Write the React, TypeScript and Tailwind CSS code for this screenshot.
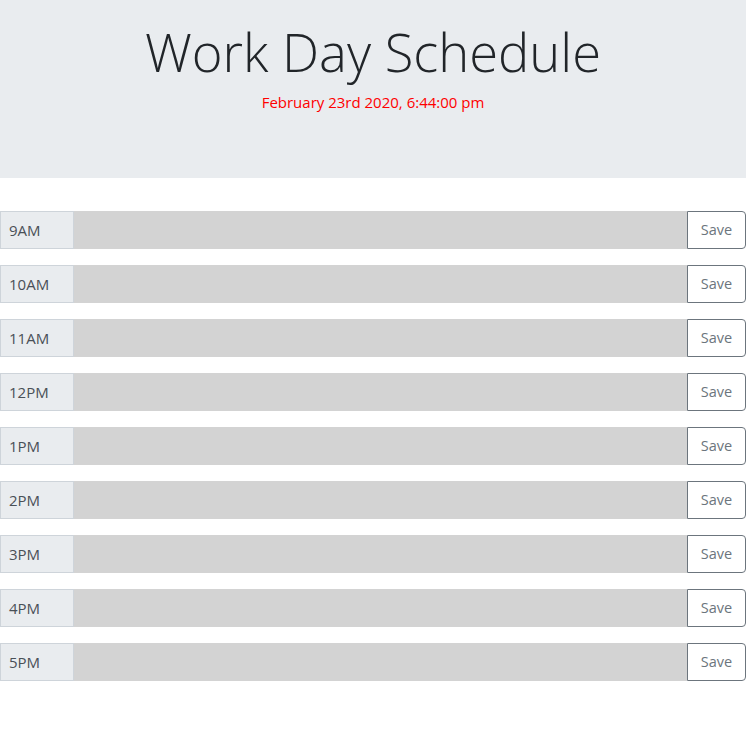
import React from 'react';

const hours = ['9AM', '10AM', '11AM', '12PM', '1PM', '2PM', '3PM', '4PM', '5PM'];

export default function App() {
  return (
    <div className="min-h-[730px] bg-white font-['Open_Sans',sans-serif]">
      {/* header */}
      <header className="h-[178px] bg-[#e9ecef] pt-[20px] text-center">
        <h1 className="text-[52.5px] font-light leading-[1.2] text-[#212529]">Work Day Schedule</h1>
        <p className="mt-[7px] text-[15px] leading-6 text-[#ff0000]">February 23rd 2020, 6:44:00 pm</p>
      </header>

      {/* time blocks */}
      <div className="mt-[33px] flex flex-col gap-4">
        {hours.map((hour) => (
          <div key={hour} className="flex h-[38px]">
            <div className="flex w-[74px] items-center border border-[#ced4da] bg-[#e9ecef] pl-2 text-[15px] text-[#495057]">
              {hour}
            </div>
            <textarea className="flex-1 resize-none bg-[#d3d3d3] outline-none" />
            <button className="w-[59px] rounded-r border border-[#6c757d] bg-white text-[14.5px] text-[#6c757d]">
              Save
            </button>
          </div>
        ))}
      </div>
    </div>
  );
}
